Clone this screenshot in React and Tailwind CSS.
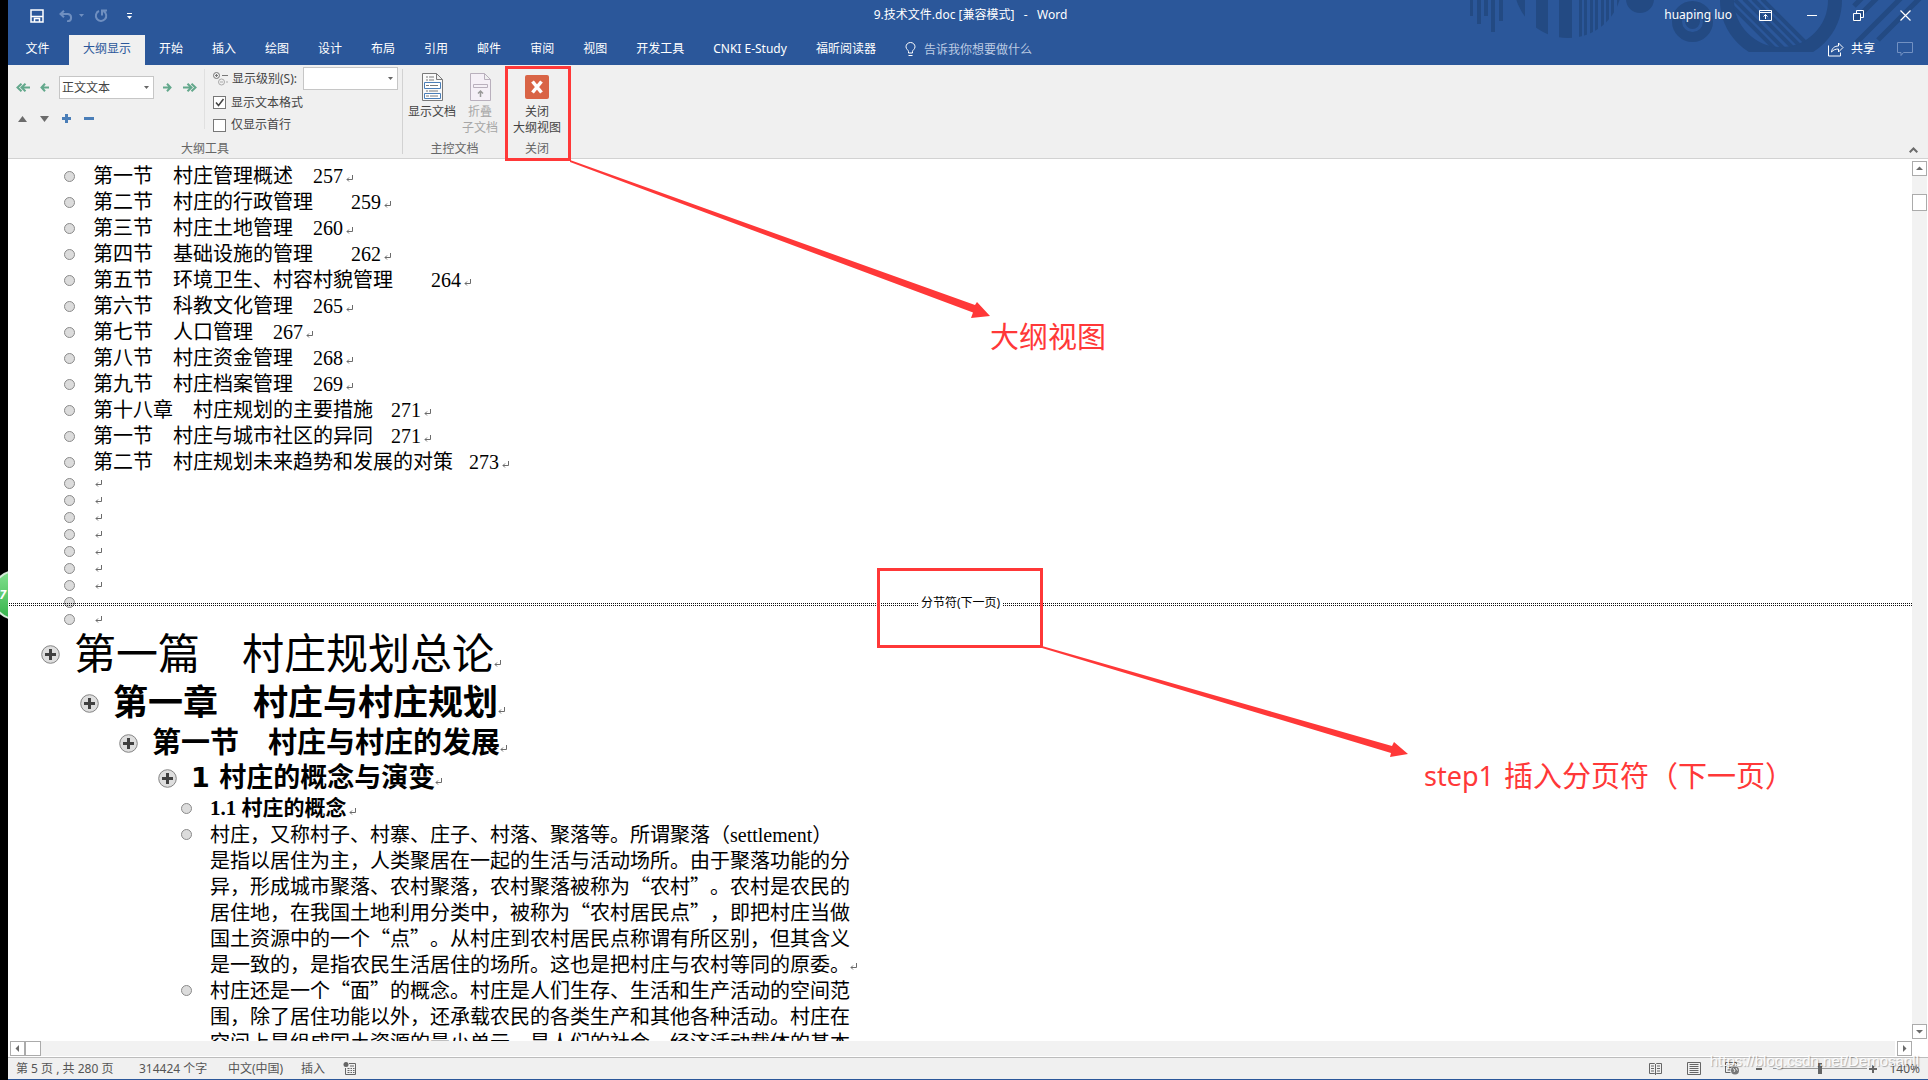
import { useState } from 'react';

const UI_FONT = "font-['Noto_Sans','Noto_Sans_CJK_SC',sans-serif]";

const tabs = ['开始', '插入', '绘图', '设计', '布局', '引用', '邮件', '审阅', '视图', '开发工具', 'CNKI E-Study', '福昕阅读器'];

const tocRows = [
  { title: '第一节　村庄管理概述', page: 257, gap: 'ml-5' },
  { title: '第二节　村庄的行政管理', page: 259, gap: 'ml-[38px]' },
  { title: '第三节　村庄土地管理', page: 260, gap: 'ml-5' },
  { title: '第四节　基础设施的管理', page: 262, gap: 'ml-[38px]' },
  { title: '第五节　环境卫生、村容村貌管理', page: 264, gap: 'ml-[38px]' },
  { title: '第六节　科教文化管理', page: 265, gap: 'ml-5' },
  { title: '第七节　人口管理', page: 267, gap: 'ml-5' },
  { title: '第八节　村庄资金管理', page: 268, gap: 'ml-5' },
  { title: '第九节　村庄档案管理', page: 269, gap: 'ml-5' },
  { title: '第十八章　村庄规划的主要措施', page: 271, gap: 'ml-[18px]' },
  { title: '第一节　村庄与城市社区的异同', page: 271, gap: 'ml-[18px]' },
  { title: '第二节　村庄规划未来趋势和发展的对策', page: 273, gap: 'ml-4' },
];

const paragraphs = [
  [
    <>村庄，又称村子、村寨、庄子、村落、聚落等。所谓聚落（<span className="font-['Liberation_Serif',serif]">settlement</span>）</>,
    '是指以居住为主，人类聚居在一起的生活与活动场所。由于聚落功能的分',
    '异，形成城市聚落、农村聚落，农村聚落被称为“农村”。农村是农民的',
    '居住地，在我国土地利用分类中，被称为“农村居民点”，即把村庄当做',
    '国土资源中的一个“点”。从村庄到农村居民点称谓有所区别，但其含义',
    <>是一致的，是指农民生活居住的场所。这也是把村庄与农村等同的原委。<ReturnMark className="inline" /></>,
  ],
  [
    '村庄还是一个“面”的概念。村庄是人们生存、生活和生产活动的空间范',
    '围，除了居住功能以外，还承载农民的各类生产和其他各种活动。村庄在',
    '空间上是组成国土资源的最小单元，是人们的社会、经济活动载体的基本',
  ],
];

function ReturnMark({ className = '' }) {
  return (
    <svg className={`h-2 w-[7px] shrink-0 ${className}`} viewBox="0 0 7 8" fill="none" stroke="#6b6b6b" aria-hidden="true">
      <path d="M6.5 0v4.500H1M3 2.500l-2 2 2 2" />
    </svg>
  );
}

function Dot({ className = '' }) {
  return <span className={`relative block size-[11px] shrink-0 rounded-full border border-[#8a8a8a] bg-[#dcdcdc] ${className}`} />;
}

function Expand() {
  return (
    <button type="button" aria-label="展开" className="block size-[19px] shrink-0">
      <svg viewBox="0 0 19 19" aria-hidden="true">
        <circle cx="9.5" cy="9.5" r="8.8" fill="#dedede" stroke="#858585" />
        <path d="M9.5 4v11M4 9.500h11" stroke="#404040" strokeWidth="3" />
      </svg>
    </button>
  );
}

function Caret({ className = '' }) {
  return (
    <svg className={`h-[3px] w-[5px] shrink-0 ${className}`} viewBox="0 0 5 3" fill="currentColor" aria-hidden="true">
      <path d="M0 0h5L2.500 3z" />
    </svg>
  );
}

function Arrow({ left, double }) {
  return (
    <svg className={`h-[9px] ${double ? 'w-[14px]' : 'w-[9px]'}`} viewBox={double ? '0 0 14 9' : '0 0 9 9'} fill="none" stroke="#63a88c" strokeWidth="2" aria-hidden="true">
      {double ? (
        <path d={left ? 'M5.500.7l-4 3.800 4 3.800M9.500.7l-4 3.800 4 3.800M6 4.500h8' : 'M8.500.7l4 3.800-4 3.800M4.500.7l4 3.800-4 3.800M0 4.500h8'} />
      ) : (
        <path d={left ? 'M5 .7L1.500 4.500 5 8.300M1.500 4.500H9' : 'M4 .7l3.500 3.800L4 8.300M7.500 4.500H0'} />
      )}
    </svg>
  );
}

function TitleArt() {
  return (
    <svg className="absolute top-0 right-0 h-[65px] w-[468px]" viewBox="1460 0 468 65" fill="#234a83" aria-hidden="true">
      <path d="M1470 0h3v16h-3zM1477 0h4v24h-4zM1484 0h4v16h-4zM1491 0h4v32h-4zM1499 0h4v21h-4z" />
      <clipPath id="disc"><circle cx="1568" cy="-16" r="54" /></clipPath>
      <path
        clipPath="url(#disc)"
        d="M1514 0h11v40h-11zM1536 0h12v40h-12zM1559 0h13v40h-13zM1579 0h3v40h-3zM1584 0h3v40h-3zM1590 0h3v40h-3zM1595 0h3v40h-3zM1601 0h3v40h-3zM1606 0h3v40h-3zM1611 0h3v40h-3zM1617 0h3v40h-3z"
      />
      <circle cx="1640" cy="-1" r="14" />
      <circle cx="1692.500" cy="21.500" r="15.500" fill="none" stroke="#234a83" strokeWidth="10" />
      <circle cx="1692.500" cy="21.500" r="7.500" />
      <clipPath id="ringcut"><path d="M1700 0h160v52h-160z" /></clipPath>
      <circle cx="1781" cy="0" r="54" fill="none" stroke="#234a83" strokeWidth="14" clipPath="url(#ringcut)" />
      <clipPath id="hole"><circle cx="1781" cy="0" r="48" /></clipPath>
      <path clipPath="url(#hole)" d="M1726 0l55 55M1735 0l55 55M1744-1l55 55M1753-1l55 55M1762-1l55 55" stroke="#234a83" strokeWidth="4" />
      <path d="M1854 6l8-8M1854 21l24-24M1856 43l46-46M1878 40l44-44" stroke="#234a83" strokeWidth="5" />
    </svg>
  );
}

function TitleBar() {
  return (
    <div className="relative flex h-[35px] items-center text-white">
      <div className="flex flex-1 items-center pb-1 pl-[22px]">
        <button type="button" aria-label="保存">
          <svg className="size-[14px]" viewBox="0 0 14 14" fill="none" stroke="white" strokeWidth="1.500" aria-hidden="true">
            <path d="M1 1h12v12H1zM1 7.500h12M4.500 13v-3.500h5V13" />
          </svg>
        </button>
        <button type="button" aria-label="撤消" className="ml-[15px] flex items-center gap-[6px] text-[#6f8fc0]">
          <svg className="h-3 w-[14px]" viewBox="0 0 14 12" fill="none" stroke="currentColor" strokeWidth="2" aria-hidden="true">
            <path d="M5 .7L1.500 4 5 7.300M2 4h7a3.700 3.700 0 010 7.300H8" />
          </svg>
          <Caret />
        </button>
        <button type="button" aria-label="重复" className="ml-[10px] text-[#6f8fc0]">
          <svg className="size-[14px]" viewBox="0 0 14 14" fill="none" stroke="currentColor" strokeWidth="2" aria-hidden="true">
            <path d="M5 2a5.200 5.200 0 104.500.2M8 6.500V1.500h5" />
          </svg>
        </button>
        <button type="button" aria-label="自定义快速访问工具栏" className="ml-[19px] flex flex-col items-center gap-[2px]">
          <span className="h-px w-[5px] bg-white" />
          <Caret />
        </button>
      </div>
      <h1 className="pb-[5px] text-xs whitespace-pre">9.技术文件.doc [兼容模式]   -   Word</h1>
      <div className="flex flex-1 items-center justify-end pr-[17px] pb-[5px]">
        <span className="text-xs">huaping luo</span>
        <button type="button" aria-label="功能区显示选项" className="ml-[27px]">
          <svg className="h-[11px] w-[13px]" viewBox="0 0 13 11" fill="none" stroke="white" aria-hidden="true">
            <path d="M.5.5h12v10H.5zM.5 2.500h12M6.500 9V4.500M4.500 6.500l2-2 2 2" />
          </svg>
        </button>
        <button type="button" aria-label="最小化" className="ml-[35px] flex h-[11px] items-center">
          <span className="block h-px w-[10px] bg-white" />
        </button>
        <button type="button" aria-label="还原" className="ml-9">
          <svg className="size-[11px]" viewBox="0 0 11 11" fill="none" stroke="white" aria-hidden="true">
            <path d="M.5 3.500h7v7h-7zM3.500 3V.5h7v7H8" />
          </svg>
        </button>
        <button type="button" aria-label="关闭窗口" className="ml-9">
          <svg className="size-[11px]" viewBox="0 0 11 11" fill="none" stroke="white" strokeWidth="1.200" aria-hidden="true">
            <path d="M.5.5l10 10M10.500.5l-10 10" />
          </svg>
        </button>
      </div>
    </div>
  );
}

function TabBar() {
  return (
    <nav className="relative flex h-[30px] items-stretch text-xs text-white">
      <button type="button" className="w-[59px] pb-[2px]">文件</button>
      <button type="button" className="ml-[2px] bg-[#f0f0f0] px-[14px] pb-[2px] text-[#2b579a]">大纲显示</button>
      <div className="flex gap-px">
        {tabs.map((tab) => (
          <button key={tab} type="button" className="px-[14px] pb-[2px] whitespace-nowrap">{tab}</button>
        ))}
      </div>
      <button type="button" className="ml-[15px] flex items-center gap-2 pb-px text-[#bccbe3]">
        <svg className="h-[15px] w-[11px]" viewBox="0 0 11 15" fill="none" stroke="white" aria-hidden="true">
          <path d="M3.500 11V9.500C3.500 8 1 7.300 1 4.800a4.500 4.300 0 019 0C10 7.300 7.500 8 7.500 9.500V11zM3.500 13.500h4" />
        </svg>
        告诉我你想要做什么
      </button>
      <div className="ml-auto flex items-center pr-[15px] pb-[2px]">
        <button type="button" className="flex items-center gap-[7px]">
          <svg className="size-4" viewBox="0 0 16 15" fill="none" stroke="white" aria-hidden="true">
            <path d="M.5 4v10.500h12V11M3.500 10.500c.5-4 3-6 7-6V1.500l4.500 4.500-4.500 4.500v-3c-3 0-5 .7-7 3z" />
          </svg>
          共享
        </button>
        <button type="button" aria-label="批注" className="ml-[22px]">
          <svg className="h-[15px] w-4" viewBox="0 0 16 15" fill="none" stroke="#7291c2" aria-hidden="true">
            <path d="M.5.5h15v10h-9L4 13.500v-3H.5z" />
          </svg>
        </button>
      </div>
    </nav>
  );
}

function OutlineTools() {
  const [showFormat, setShowFormat] = useState(true);
  const [firstLine, setFirstLine] = useState(false);

  return (
    <section className="flex w-[394px] flex-col">
      <div className="flex h-[71px] pl-2">
        <div className="flex w-[188px] flex-col">
          <div className="mt-[11px] flex h-[23px] items-center">
            <button type="button" aria-label="提升至标题 1"><Arrow left double /></button>
            <button type="button" aria-label="升级" className="ml-[10px]"><Arrow left /></button>
            <div className="relative ml-[10px]">
              <select aria-label="大纲级别" className="block h-[23px] w-[95px] appearance-none border border-[#c6c6c6] bg-white pl-[2px] text-xs text-[#444]">
                <option>正文文本</option>
              </select>
              <Caret className="absolute top-[10px] right-[5px] text-[#666]" />
            </div>
            <button type="button" aria-label="降级" className="ml-[9px]"><Arrow /></button>
            <button type="button" aria-label="降级为正文" className="ml-[11px]"><Arrow double /></button>
          </div>
          <div className="mt-[14px] flex h-[11px] items-center gap-[13px] pl-[2px] text-[#6b6b6b]">
            <button type="button" aria-label="上移">
              <svg className="h-[6px] w-[9px]" viewBox="0 0 9 6" fill="currentColor"><path d="M0 6h9L4.500 0z" /></svg>
            </button>
            <button type="button" aria-label="下移">
              <svg className="h-[6px] w-[9px]" viewBox="0 0 9 6" fill="currentColor"><path d="M0 0h9L4.500 6z" /></svg>
            </button>
            <button type="button" aria-label="展开所选">
              <svg className="size-[9px]" viewBox="0 0 9 9" stroke="#4a7eb8" strokeWidth="3"><path d="M0 4.500h9M4.500 0v9" /></svg>
            </button>
            <button type="button" aria-label="折叠所选">
              <svg className="h-[9px] w-[10px]" viewBox="0 0 10 9" stroke="#4a7eb8" strokeWidth="3"><path d="M0 4.500h10" /></svg>
            </button>
          </div>
        </div>
        <div className="mt-1 h-[60px] w-px bg-[#e0e0e0]" />
        <div className="flex flex-col pt-px pl-2 text-xs text-[#444]">
          <div className="flex h-[25px] items-center">
            <svg className="h-[14px] w-[15px]" viewBox="0 0 15 14" fill="none" stroke="#777" aria-hidden="true">
              <circle cx="3.500" cy="3.500" r="3" />
              <path d="M2 3.500h3M3.500 2v3M9 3.500h6" />
              <g stroke="#aaa"><circle cx="8.500" cy="10" r="3" /><path d="M7 10h3M13 10h2" /></g>
            </svg>
            <label htmlFor="level" className="ml-[4px] w-[71px] whitespace-nowrap">显示级别(S):</label>
            <div className="relative">
              <select id="level" className="block h-[23px] w-[95px] appearance-none border border-[#c6c6c6] bg-white" />
              <Caret className="absolute top-[10px] right-[5px] text-[#666]" />
            </div>
          </div>
          <label className="flex h-[23px] items-center gap-[5px]">
            <span className="relative block size-[13px]">
              <input type="checkbox" checked={showFormat} onChange={(e) => setShowFormat(e.target.checked)} className="block size-[13px] appearance-none border border-[#777] bg-white" />
              {showFormat && (
                <svg className="pointer-events-none absolute inset-0" viewBox="0 0 13 13" fill="none" stroke="#444" strokeWidth="1.500">
                  <path d="M3 6.500l2.500 3L10.500 3" />
                </svg>
              )}
            </span>
            显示文本格式
          </label>
          <label className="flex h-[22px] items-center gap-[5px]">
            <input type="checkbox" checked={firstLine} onChange={(e) => setFirstLine(e.target.checked)} className="block size-[13px] appearance-none border border-[#777] bg-white" />
            仅显示首行
          </label>
        </div>
      </div>
      <GroupLabel>大纲工具</GroupLabel>
    </section>
  );
}

function GroupLabel({ children }) {
  return <p className="mt-[5px] text-center text-xs leading-4 text-[#666]">{children}</p>;
}

function Ribbon() {
  return (
    <div className="flex h-[94px] border-b border-[#d2d2d2] bg-[#f0f0f0] text-xs leading-4 text-[#444]">
      <OutlineTools />
      <div className="mt-1 h-[85px] w-px bg-[#d2d2d2]" />
      <section className="flex w-[103px] flex-col">
        <div className="flex h-[71px] gap-[2px] pl-[3px]">
          <button type="button" className="flex w-[52px] flex-col items-center pt-2">
            <svg className="h-7 w-[21px] shrink-0" viewBox="0 0 21 28" fill="none" stroke="#7a7a7a" aria-hidden="true">
              <path d="M.5.5h14l6 6v21H.5zM14.500.5v6h6" fill="#fafafa" />
              <path d="M4 4h2M7 4h5M4 7h2M7 7h5M4 18h2M7 18h9" />
              <path d="M2.500 9.500h16v6h-16zM2.500 20.500h16v5h-16z" fill="white" stroke="#4a7eb8" />
              <path d="M4 12.500h3M8 12.500h8M4 23h3M8 23h8" />
            </svg>
            <span className="mt-[3px] whitespace-nowrap">显示文档</span>
          </button>
          <button type="button" disabled className="flex w-10 flex-col items-center pt-2 text-[#a6a6a6]">
            <svg className="h-7 w-[21px] shrink-0" viewBox="0 0 21 28" fill="#f5f0f7" stroke="#b9b0bd" aria-hidden="true">
              <path d="M.5.5h14l6 6v21H.5zM14.500.5v6h6M3.500 11.500h14v3h-14z" />
              <path d="M10.500 24v-6M8 20.500l2.500-2.500 2.500 2.500" stroke="#999" strokeWidth="1.500" fill="none" />
            </svg>
            <span className="mt-[3px]">折叠</span>
            <span className="whitespace-nowrap">子文档</span>
          </button>
        </div>
        <GroupLabel>主控文档</GroupLabel>
      </section>
      <section className="relative flex w-[62px] flex-col">
        <div className="flex h-[71px] justify-center">
          <button type="button" className="flex flex-col items-center pt-[10px]">
            <svg className="size-6 shrink-0" viewBox="0 0 24 24" aria-hidden="true">
              <rect width="24" height="24" rx="2" fill="#d96446" />
              <path d="M7.500 6.500l9 11M16.500 6.500l-9 11" stroke="white" strokeWidth="3.500" />
            </svg>
            <span className="mt-[5px]">关闭</span>
            <span className="whitespace-nowrap">大纲视图</span>
          </button>
        </div>
        <GroupLabel>关闭</GroupLabel>
        <div className="pointer-events-none absolute top-px -right-[3px] -bottom-[3px] -left-px z-10 border-[3px] border-[#ff3838]" />
      </section>
      <button type="button" aria-label="折叠功能区" className="mt-auto mr-[10px] mb-[5px] ml-auto">
        <svg className="h-[6px] w-[9px]" viewBox="0 0 9 6" fill="none" stroke="#6b6b6b" strokeWidth="2"><path d="M.7 5.300L4.500 1.500l3.800 3.800" /></svg>
      </button>
    </div>
  );
}

function DottedRule() {
  return (
    <div className="flex-1 pt-1">
      <div className="h-[3px] bg-[repeating-linear-gradient(90deg,#111_0_1px,transparent_1px_2px)] [mask-image:linear-gradient(#000_1px,transparent_1px_2px,#000_2px)]" />
    </div>
  );
}

function SectionBreak() {
  return (
    <div className="relative flex h-[17px] items-center pl-px">
      <div className="absolute left-14"><Dot /></div>
      <DottedRule />
      <span className={`w-[84px] text-center text-xs leading-4 ${UI_FONT}`}>分节符(下一页)</span>
      <DottedRule />
    </div>
  );
}

function Document() {
  return (
    <main className="min-w-0 flex-1 overflow-hidden bg-white pt-1 font-['Liberation_Serif','Noto_Sans_CJK_SC',serif] text-black">
      {tocRows.map((row) => (
        <div key={row.title} className="flex h-[26px] items-center pl-14 text-xl leading-[26px] whitespace-nowrap">
          <Dot />
          <span className="ml-[18px]">{row.title}</span>
          <span className={row.gap}>{row.page}</span>
          <ReturnMark className="mt-[6px] ml-[3px]" />
        </div>
      ))}
      {[1, 2, 3, 4, 5, 6, 7].map((n) => (
        <div key={n} className="flex h-[17px] items-center pl-14">
          <Dot />
          <ReturnMark className="ml-5" />
        </div>
      ))}
      <SectionBreak />
      <div className="flex h-[17px] items-center pl-14">
        <Dot />
        <ReturnMark className="ml-5" />
      </div>

      <div className="flex h-[52px] items-center pl-[33px]">
        <Expand />
        <h2 className="ml-[14px] pt-[2px] text-[42px] leading-[52px] whitespace-nowrap">第一篇　村庄规划总论</h2>
        <ReturnMark className="mt-5" />
      </div>
      <div className="flex h-[46px] items-center pl-[72px]">
        <Expand />
        <h3 className="ml-[14px] pt-[2px] text-[35px] leading-[46px] font-bold whitespace-nowrap">第一章　村庄与村庄规划</h3>
        <ReturnMark className="mt-4" />
      </div>
      <div className="flex h-[34px] items-center pl-[111px]">
        <Expand />
        <h4 className="ml-[14px] text-[29px] leading-[34px] font-bold whitespace-nowrap">第一节　村庄与村庄的发展</h4>
        <ReturnMark className="mt-3" />
      </div>
      <div className="flex h-9 items-center pl-[150px]">
        <Expand />
        <h5 className="ml-[14px] font-['DejaVu_Sans','Noto_Sans_CJK_SC',sans-serif] text-[27px] leading-9 font-bold whitespace-nowrap">1 村庄的概念与演变</h5>
        <ReturnMark className="mt-2" />
      </div>
      <div className="flex h-[25px] items-center pl-[173px]">
        <Dot />
        <h6 className="ml-[18px] text-[21px] leading-[25px] font-bold whitespace-nowrap">1.1 村庄的概念</h6>
        <ReturnMark className="mt-[6px] ml-[2px]" />
      </div>
      {paragraphs.map((lines, i) => (
        <div key={i} className="flex pl-[173px]">
          <Dot className="mt-2" />
          <p className="ml-[18px] font-['Noto_Sans_CJK_SC',serif] text-xl leading-[26px] whitespace-nowrap [text-spacing-trim:space-all]">
            {lines.map((line, n) => (
              <span key={n} className="block h-[26px]">{line}</span>
            ))}
          </p>
        </div>
      ))}
    </main>
  );
}

function ScrollButton({ label, d }) {
  return (
    <button type="button" aria-label={label} className="flex size-[15px] shrink-0 items-center justify-center border border-[#ababab] bg-white">
      <svg className="size-[7px]" viewBox="0 0 7 7" fill="#6b6b6b"><path d={d} /></svg>
    </button>
  );
}

function StatusBar() {
  const [zoom, setZoom] = useState(140);
  return (
    <footer className="flex h-[23px] items-center border-t border-b border-t-[#bcbcbc] border-b-[#2b579a] bg-[#f0f0f0] pr-2 pl-2 text-xs text-[#555]">
      <span className="w-[123px] whitespace-nowrap">第 5 页 , 共 280 页</span>
      <span className="w-[89px] whitespace-nowrap">314424 个字</span>
      <span className="w-[73px] whitespace-nowrap">中文(中国)</span>
      <span className="w-[42px]">插入</span>
      <svg className="h-[13px] w-[14px]" viewBox="0 0 14 13" fill="none" stroke="#666" aria-hidden="true">
        <path d="M6 1.500h6.500v11H2.500V6M7 4h4" />
        <path d="M4.500 6.500h2M7.500 6.500h1.500M10 6.500h1.500M4.500 8.500h2M7.500 8.500h1.500M10 8.500h1.500M4.500 10.500h2M7.500 10.500h1.500M10 10.500h1.500" />
        <circle cx="3" cy="2.500" r="2.500" fill="#666" stroke="none" />
      </svg>
      <div className="ml-auto flex items-center">
        <button type="button" aria-label="阅读视图">
          <svg className="h-[13px] w-[13px]" viewBox="0 0 13 13" fill="none" stroke="#666">
            <path d="M.5 1.500h5l1 1 1-1h5v10h-5l-1 1-1-1h-5zM6.500 2v11M2 4h3M2 6.500h3M2 9h3M8 4h3M8 6.500h3M8 9h3" />
          </svg>
        </button>
        <button type="button" aria-label="页面视图" className="ml-[25px]">
          <svg className="h-[13px] w-[14px]" viewBox="0 0 14 13" fill="none" stroke="#666"><path d="M.5.5h13v12H.5zM2.500 2.500h9M2.500 4.500h9M2.500 6.500h9M2.500 8.500h9M2.500 10.500h9" /></svg>
        </button>
        <button type="button" aria-label="Web 版式视图" className="ml-6">
          <svg className="h-[13px] w-[14px]" viewBox="0 0 14 13" fill="none" stroke="#666">
            <path d="M11.500 4V.5H.5v10h5M2.500 3h7M2.500 5.500h4M2.500 8h3" />
            <circle cx="10" cy="8.500" r="4" fill="#777" stroke="none" />
            <path d="M8 6.500l2 1.500-1 2M11 6l1.500 2.500" stroke="#eee" />
          </svg>
        </button>
        <button type="button" aria-label="缩小" className="ml-[17px]"><span className="block h-[2px] w-[6px] bg-[#666]" /></button>
        <input
          type="range"
          aria-label="缩放"
          min="10"
          max="270"
          value={zoom}
          onChange={(e) => setZoom(Number(e.target.value))}
          className="mr-[2px] ml-[11px] h-[11px] w-[94px] appearance-none bg-[linear-gradient(#999,#999)] bg-size-[100%_1px] bg-center bg-no-repeat [&::-webkit-slider-thumb]:h-[11px] [&::-webkit-slider-thumb]:w-1 [&::-webkit-slider-thumb]:appearance-none [&::-webkit-slider-thumb]:bg-[#666]"
        />
        <button type="button" aria-label="放大">
          <svg className="size-2" viewBox="0 0 8 8" stroke="#666" strokeWidth="2"><path d="M0 4h8M4 0v8" /></svg>
        </button>
        <span className="ml-3">{zoom}%</span>
      </div>
    </footer>
  );
}

// Red callouts that lie over the document
function Annotations() {
  return (
    <div className="pointer-events-none absolute inset-0 text-[29px] leading-9 text-[#ff3838]">
      <svg className="absolute top-0 left-0 h-[1080px] w-[1928px]" viewBox="0 0 1928 1080" fill="#ff3838" aria-hidden="true">
        <path d="M570 160L975 305L977 302L990 316L971 318L973 312.500L570 162Z" />
        <path d="M1042 646L1392 746L1394 742L1408 754L1390 757L1391 753L1042 648Z" />
      </svg>
      <div className="absolute top-[568px] left-[877px] h-20 w-[166px] border-[3px] border-[#ff3838]" />
      <p className="absolute top-[319px] left-[990px] whitespace-nowrap">大纲视图</p>
      <p className="absolute top-[758px] left-[1424px] flex gap-[10px] whitespace-nowrap">
        <span className="text-[27px]">step1</span>
        插入分页符（下一页）
      </p>
      <p className="absolute right-[9px] bottom-[9px] font-['Liberation_Sans',sans-serif] text-[15px] leading-5 text-white/90 [text-shadow:1px_1px_1px_rgb(0_0_0/0.3)]">
        https://blog.csdn.net/Demosanll
      </p>
    </div>
  );
}

export default function App() {
  return (
    <div className={`relative flex h-screen overflow-hidden bg-black ${UI_FONT}`}>
      <div className="relative w-2 shrink-0 overflow-hidden">
        <div className="absolute top-[570px] -left-[9px] flex size-[50px] items-center rounded-full border-2 border-[#d5ead8] bg-linear-to-b from-[#7fe08d] to-[#35b44c]">
          <span className="text-xs font-bold text-white italic">67</span>
        </div>
      </div>
      <div className="flex min-w-0 flex-1 flex-col bg-white">
        <header className="relative bg-[#2b579a]">
          <TitleArt />
          <TitleBar />
          <TabBar />
        </header>
        <Ribbon />
        <div className="flex min-h-0 flex-1">
          <Document />
          <div className="flex w-4 flex-col items-start pt-[2px] pb-[2px]">
            <ScrollButton label="向上滚动" d="M0 5h7L3.500 1.500z" />
            <div className="w-[15px] flex-1 bg-[#f2f2f2] pt-[18px]">
              <div className="h-[17px] border border-[#ababab] bg-white" />
            </div>
            <ScrollButton label="向下滚动" d="M0 2h7L3.500 5.500z" />
          </div>
        </div>
        <div className="flex h-4 pr-4 pl-[2px]">
          <ScrollButton label="向左滚动" d="M5 0v7L1.500 3.500z" />
          <div className="mr-[2px] h-[15px] flex-1 bg-[#f2f2f2]">
            <div className="h-[15px] w-4 border border-[#ababab] bg-white" />
          </div>
          <ScrollButton label="向右滚动" d="M2 0v7l3.500-3.500z" />
        </div>
        <StatusBar />
      </div>
      <Annotations />
    </div>
  );
}
